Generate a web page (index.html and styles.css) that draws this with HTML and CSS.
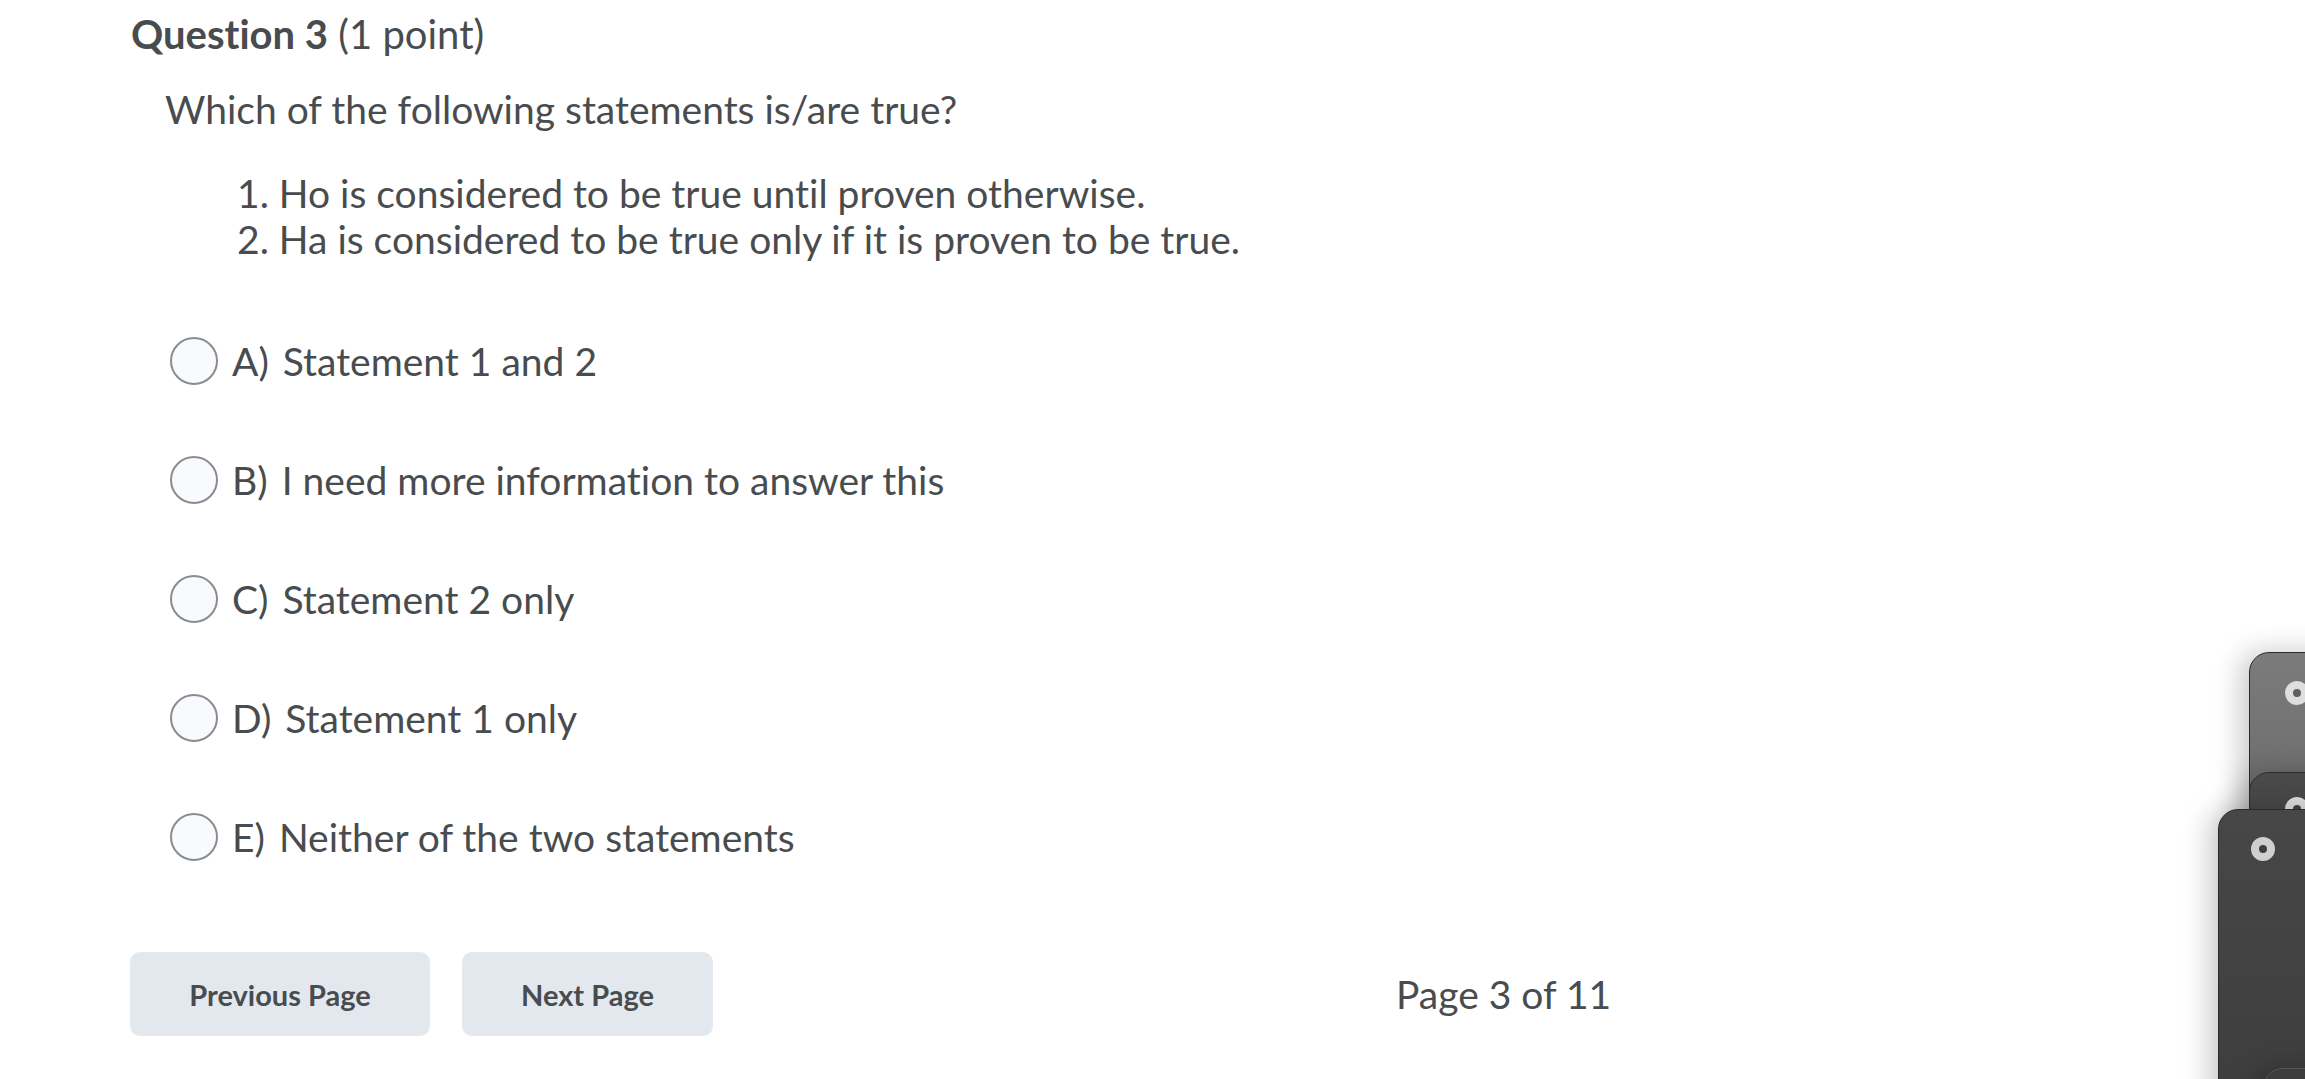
FILE: index.html
```html
<!DOCTYPE html>
<html lang="en">
<head>
<meta charset="utf-8">
<title>Question 3</title>
<link rel="stylesheet" href="styles.css">
</head>
<body>
<main class="quiz">
  <h2 class="q-title"><strong>Question 3</strong> (1 point)</h2>
  <div class="q-body">
    <p class="q-text">Which of the following statements is/are true?</p>
    <ol class="q-list">
      <li>Ho is considered to be true until proven otherwise.</li>
      <li>Ha is considered to be true only if it is proven to be true.</li>
    </ol>
  </div>
  <div class="options">
    <label class="opt"><span class="radio"></span><span class="opt-text"><span class="opt-key">A)</span>Statement 1 and 2</span></label>
    <label class="opt"><span class="radio"></span><span class="opt-text"><span class="opt-key">B)</span>I need more information to answer this</span></label>
    <label class="opt"><span class="radio"></span><span class="opt-text"><span class="opt-key">C)</span>Statement 2 only</span></label>
    <label class="opt"><span class="radio"></span><span class="opt-text"><span class="opt-key">D)</span>Statement 1 only</span></label>
    <label class="opt"><span class="radio"></span><span class="opt-text"><span class="opt-key">E)</span>Neither of the two statements</span></label>
  </div>
  <div class="nav">
    <button class="btn btn-prev">Previous Page</button>
    <button class="btn btn-next">Next Page</button>
    <span class="page-count">Page 3 of 11</span>
  </div>
</main>
<div class="tags">
  <div class="tag tag1"><span class="hole"></span></div>
  <div class="tag tag2"><span class="hole"></span></div>
  <div class="tag tag3"><span class="hole"></span></div>
  <div class="tag tag4"></div>
</div>
</body>
</html>
```
FILE: styles.css
```css
html, body {
  margin: 0;
  padding: 0;
  background: #ffffff;
  overflow: hidden;
}
body {
  width: 2305px;
  height: 1079px;
  font-family: Lato, "Open Sans", "Liberation Sans", sans-serif;
  font-variant-ligatures: no-common-ligatures;
  color: #494c4e;
  position: relative;
}
.quiz {
  padding: 12px 0 0 131px;
}
.q-title {
  margin: 0;
  font-size: 40px;
  line-height: 44px;
  font-weight: 400;
}
.q-title strong {
  font-weight: 700;
}
.q-body {
  padding-left: 34px;
}
.q-text {
  margin: 30px 0 0;
  font-size: 39px;
  line-height: 46px;
}
.q-list {
  margin: 38px 0 0;
  padding-left: 72px;
  font-size: 39px;
  line-height: 46px;
  list-style: none;
  counter-reset: item;
}
.q-list li {
  counter-increment: item;
}
.q-list li::before {
  content: counter(item) ". ";
}
.options {
  margin-top: 39px;
  display: flex;
  flex-direction: column;
}
.opt {
  height: 119px;
  display: flex;
  align-items: center;
  padding-left: 39px;
  font-size: 39px;
}
.radio {
  width: 44px;
  height: 44px;
  border: 2px solid #8a8d90;
  border-radius: 50%;
  background: #f9fafe;
  flex: none;
}
.opt-text {
  margin-left: 14px;
}
.opt-key {
  margin-right: 14px;
}
.nav {
  margin-top: 56px;
  display: flex;
  align-items: center;
}
.btn {
  height: 84px;
  border: none;
  border-radius: 10px;
  background: #e3e8ef;
  color: #494c4e;
  font-family: Lato, "Open Sans", "Liberation Sans", sans-serif;
  font-variant-ligatures: no-common-ligatures;
  font-weight: 700;
  font-size: 29px;
  padding: 0;
}
.btn-prev {
  width: 300px;
  margin-left: -1px;
}
.btn-next {
  width: 251px;
  margin-left: 32px;
}
.page-count {
  margin-left: 683px;
  font-size: 39px;
}
.tags {
  position: absolute;
  inset: 0;
  overflow: hidden;
  pointer-events: none;
}
.tag {
  position: absolute;
  width: 200px;
  border: 1px solid #2a2a2a;
  border-radius: 20px 0 0 0;
  box-shadow: -8px 0 28px rgba(0, 0, 0, 0.22);
}
.tag1 {
  left: 2249px;
  top: 652px;
  height: 300px;
  background: linear-gradient(180deg, #7b7b7b 0%, #5e5e5e 100%);
}
.tag2 {
  left: 2249px;
  top: 772px;
  height: 200px;
  background: linear-gradient(180deg, #4a4a4a 0%, #3e3e3e 100%);
}
.tag3 {
  left: 2218px;
  top: 809px;
  height: 400px;
  background: linear-gradient(180deg, #474747 0%, #3a3a3a 100%);
}
.tag4 {
  left: 2263px;
  top: 1068px;
  height: 100px;
  background: #3c3c3c;
  border-color: #555;
}
.hole {
  position: absolute;
  width: 8px;
  height: 8px;
  border-radius: 50%;
  background: #444;
  border: 8px solid #dedede;
}
.tag1 .hole {
  left: 35px;
  top: 28px;
  background: #5f5f5f;
}
.tag2 .hole {
  left: 35px;
  top: 24px;
}
.tag3 .hole {
  left: 32px;
  top: 27px;
  background: #3e3e3e;
  border-color: #cfcfcf;
}
```
